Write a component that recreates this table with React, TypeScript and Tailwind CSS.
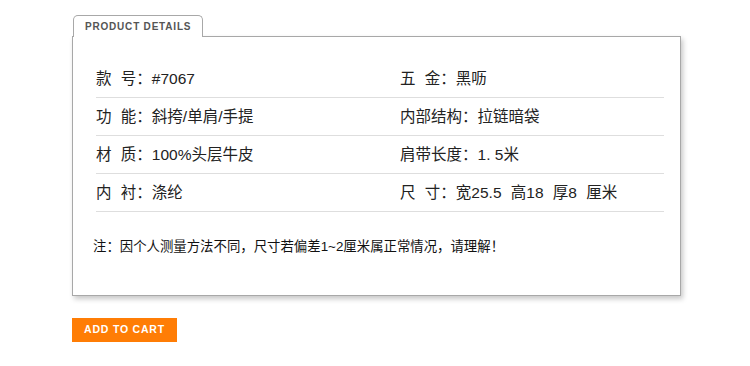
type Cell = { label: string; value: string; tight?: boolean };

const rows: [Cell, Cell][] = [
  [{ label: '款 号', value: '#7067' }, { label: '五 金', value: '黑呖' }],
  [{ label: '功 能', value: '斜挎/单肩/手提' }, { label: '内部结构', value: '拉链暗袋' }],
  [{ label: '材 质', value: '100%头层牛皮' }, { label: '肩带长度', value: '1. 5米', tight: true }],
  [{ label: '内 衬', value: '涤纶' }, { label: '尺 寸', value: '宽25.5 高18 厚8 厘米' }],
];

function Item({ c }: { c: Cell }) {
  return (
    <div className="h-[38px] flex items-center border-b border-[#dedede] text-[15.5px] text-[#222]">
      <span className="[word-spacing:5px]">{c.label}：</span>
      <span className={c.tight ? '' : '[word-spacing:5px]'}>{c.value}</span>
    </div>
  );
}

export default function App() {
  return (
    <div className="bg-white w-[750px] h-[366px] pt-[15px] pl-[72px] flex flex-col items-start font-['Liberation_Sans','Noto_Sans_CJK_SC',sans-serif]">
      <div className="relative z-10 -mb-px ml-px flex h-[22px] items-center rounded-t-[5px] border border-b-0 border-[#a8a8a8] bg-white px-[11px]">
        <span className="text-[10px] font-bold tracking-[0.8px] text-[#555]">PRODUCT DETAILS</span>
      </div>
      <div className="w-[609px] h-[260px] border border-[#a8a8a8] bg-white shadow-[2px_3px_5px_rgba(0,0,0,0.22)] pt-[23px] pl-[23px] pr-[16px]">
        <div className="grid grid-cols-[304px_1fr]">
          {rows.map(([l, r], i) => (
            <div key={i} className="contents">
              <Item c={l} />
              <Item c={r} />
            </div>
          ))}
        </div>
        <p className="mt-[25px] leading-[20px] text-[13.4px] text-[#111] -ml-[3px]">
          注：因个人测量方法不同，尺寸若偏差1~2厘米属正常情况，请理解！
        </p>
      </div>
      <button className="mt-[22px] flex w-[105px] h-[24px] items-center justify-center bg-[#ff7d05] text-[10.5px] font-bold tracking-[0.8px] text-white">
        ADD TO CART
      </button>
    </div>
  );
}
